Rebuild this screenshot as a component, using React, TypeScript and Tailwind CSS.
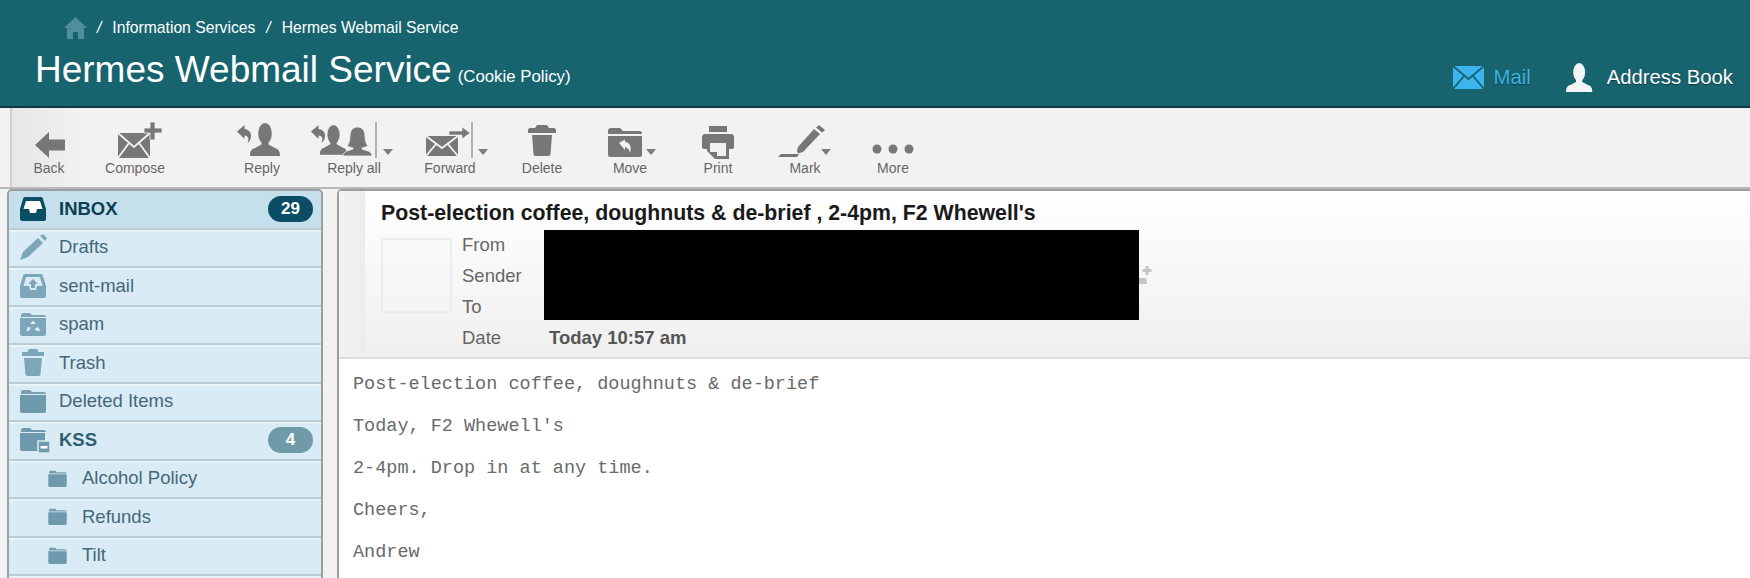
import React from "react";

const Caret = ({ className = "" }: { className?: string }) => (
  <svg width="10" height="6" viewBox="0 0 10 6" className={className}><path d="M0 0h10L5 6z" fill="#7d7d7d" /></svg>
);

const Person = ({ x = 0, y = 0, s = 1, fill = "#777" }: { x?: number; y?: number; s?: number; fill?: string }) => (
  <g transform={`translate(${x} ${y}) scale(${s})`}>
    <ellipse cx="15" cy="10.500" rx="6.800" ry="10.500" fill={fill} />
    <path d="M0 33c0-5 1.500-7 5-8l6.500-3.500V18h7v3.500L25 25c3.500 1 5 3 5 8z" fill={fill} />
  </g>
);

const ReplyArrow = ({ x, y }: { x: number; y: number }) => (
  <path transform={`translate(${x} ${y})`} d="M0 6.500L7.500 0v4c5 .5 7 4 6.500 8-.3 2.500-1.500 4.500-3.500 6 .8-2 1.200-4 .5-5.500-.6-1.300-2-2-3.500-2V14z" fill="#777" />
);

const icons: Record<string, React.ReactNode> = {
  back: (
    <svg width="30" height="26" viewBox="0 0 30 26"><path d="M14 0v7.500h16v11H14V26L0 13z" fill="#777" /></svg>
  ),
  compose: (
    <svg width="45" height="36" viewBox="0 0 45 36">
      <path d="M0 11h32v25H0z" fill="#777" />
      <path d="M0 11l16 14 16-14M0 36l11-15M32 36L21 21" fill="none" stroke="#f2f2f2" strokeWidth="1.800" />
      <path d="M28 0h5v6h7v5h-7v7h-5v-7h-6V6h6z" transform="translate(4 0)" fill="#777" stroke="#f2f2f2" strokeWidth=".8" />
    </svg>
  ),
  reply: (
    <svg width="43" height="33" viewBox="0 0 43 33">
      <ReplyArrow x={0} y={2} />
      <Person x={13} y={0} />
    </svg>
  ),
  replyall: (
    <svg width="61" height="31" viewBox="0 0 61 31">
      <ReplyArrow x={0} y={0} />
      <Person x={9} y={0} s={0.900} />
      <path d="M46.500 2c5 0 7.500 4 7.500 9 0 4 1 8 3 10-2 1-4 1.500-6 2v1l6 2c2.500 1 4 2.500 4 5H32c0-2.500 1.500-4 4-5l6-2v-1c-2-.5-4-1-6-2 2-2 3-6 3-10 0-5 2.500-9 7.500-9z" fill="#777" stroke="#f2f2f2" strokeWidth=".8" />
    </svg>
  ),
  forward: (
    <svg width="44" height="29" viewBox="0 0 44 29">
      <path d="M0 9h32v20H0z" fill="#777" />
      <path d="M0 9l16 12L32 9M0 29l11-13M32 29L21 16" fill="none" stroke="#f2f2f2" strokeWidth="1.800" />
      <path d="M23 4h13V0l8 6-8 6V8H23z" fill="#777" stroke="#f2f2f2" strokeWidth=".6" />
    </svg>
  ),
  del: (
    <svg width="28" height="31" viewBox="0 0 28 31">
      <path d="M9 0h10l2 3h5c1 0 2 1 2 2v3H0V5c0-1 1-2 2-2h5z" fill="#777" />
      <path d="M4 10h20l-1.500 19c0 1-1 2-2 2h-13c-1 0-2-1-2-2z" fill="#777" />
    </svg>
  ),
  move: (
    <svg width="34" height="29" viewBox="0 0 34 29">
      <path d="M0 3c0-2 1-3 3-3h9l3 3h17c1 0 2 1 2 2v1H0z" fill="#777" />
      <path d="M0 8h34v19c0 1-1 2-2 2H2c-1 0-2-1-2-2z" fill="#777" />
      <path d="M11 15l6-3.500V14c5 .5 7 5 5 11-.6-3-2.500-5.500-5-6v3z" fill="#f2f2f2" />
    </svg>
  ),
  print: (
    <svg width="32" height="33" viewBox="0 0 32 33">
      <path d="M7 0h18v6H7z" fill="#777" />
      <path d="M3 8h26c1.500 0 3 1 3 3v10c0 1-1 2-2 2h-3V15H5v8H2c-1 0-2-1-2-2V11c0-2 1.500-3 3-3z" fill="#777" />
      <path d="M5 15h22v18H13l-8-8z" fill="#777" />
      <path d="M8 17h16v13H15v-4H8z" fill="#f2f2f2" />
    </svg>
  ),
  mark: (
    <svg width="47" height="32" viewBox="0 0 47 32">
      <path d="M0 32l3-3h18l-2 3z" fill="#777" />
      <path d="M19 26l1-4L36 4l6 5-17 18-5 1.500z" fill="#777" />
      <path d="M38 2.500l3-2.500 6 5-3 2.500z" fill="#777" />
    </svg>
  ),
  more: (
    <svg width="42" height="10" viewBox="0 0 42 10">
      <circle cx="5" cy="5" r="4.500" fill="#777" /><circle cx="21" cy="5" r="4.500" fill="#777" /><circle cx="37" cy="5" r="4.500" fill="#777" />
    </svg>
  ),
};

const tools = [
  { k: "back", t: "Back", w: "w-[76px]", x: "pt-[24px] ml-[1px]" },
  { k: "compose", t: "Compose", w: "w-[98px]", x: "pt-[14px] ml-[11px]" },
  { k: "reply", t: "Reply", w: "w-[80px] ml-[38px]", x: "pt-[15px] mr-[7px]" },
  { k: "replyall", t: "Reply all", w: "w-[104px]", x: "pt-[17px] mr-[25px]", c: "right-[13px]", sep: "right-[29px]" },
  { k: "forward", t: "Forward", w: "w-[88px]", x: "pt-[19px] mr-[4px]", c: "right-[6px]", sep: "right-[21px]" },
  { k: "del", t: "Delete", w: "w-[96px]", x: "pt-[17px]" },
  { k: "move", t: "Move", w: "w-[80px]", x: "pt-[20px] mr-[10px]", c: "right-[14px]" },
  { k: "print", t: "Print", w: "w-[96px]", x: "pt-[18px]" },
  { k: "mark", t: "Mark", w: "w-[78px]", x: "pt-[17px] mr-[7px]", c: "right-[13px]" },
  { k: "more", t: "More", w: "w-[98px]", x: "pt-[36px]" },
];

const SideFolder = ({ size = 26, h = 24 }: { size?: number; h?: number }) => (
  <svg width={size} height={h} viewBox="0 0 26 24">
    <path d="M1 3c0-1 1-2 2-2h7l2 2h12c1 0 2 1 2 2H1z" fill="#74a0b2" />
    <path d="M0 6h26v16c0 1-1 2-2 2H2c-1 0-2-1-2-2z" fill="#6f9aad" />
  </svg>
);

const sideIcons: Record<string, React.ReactNode> = {
  inbox: (
    <svg width="26" height="24" viewBox="0 0 26 24">
      <path d="M5 0h16c1 0 2 1 2 2l3 10v10c0 1-1 2-2 2H2c-1 0-2-1-2-2V12L3 2c0-1 1-2 2-2z" fill="#0c4d66" />
      <path d="M6 4h14l2.500 8H17l-1 4h-6l-1-4H3.500z" fill="#fff" />
    </svg>
  ),
  drafts: (
    <svg width="27" height="27" viewBox="0 0 27 27" className="shrink-0">
      <path d="M0 26l3-8L18 4l5 5L8 23z" fill="#7da6b8" />
      <path d="M20 2l3-2 4 4-2 3z" fill="#7da6b8" />
    </svg>
  ),
  sent: (
    <svg width="26" height="24" viewBox="0 0 26 24">
      <path d="M5 0h16c1 0 2 1 2 2l3 10v10c0 1-1 2-2 2H2c-1 0-2-1-2-2V12L3 2c0-1 1-2 2-2z" fill="#7da6b8" />
      <path d="M6 3h14l2.500 9H17l-1 4h-6l-1-4H3.500z" fill="#d9ebf4" />
      <path d="M13 5l5 5h-3v4h-4v-4H8z" fill="#7da6b8" />
    </svg>
  ),
  spam: (
    <svg width="26" height="24" viewBox="0 0 26 24">
      <path d="M1 3c0-1 1-2 2-2h7l2 2h12c1 0 2 1 2 2H1z" fill="#7da6b8" />
      <path d="M0 6h26v16c0 1-1 2-2 2H2c-1 0-2-1-2-2z" fill="#7da6b8" />
      <path d="M13 8.500l3 3.500h-6zM7.500 15l3.500.5-2 3.500H6.500zM18.500 15l1.500 4h-3.500l-2-2.500z" fill="#d9ebf4" />
    </svg>
  ),
  trash: (
    <svg width="22" height="27" viewBox="0 0 22 27">
      <path d="M7 0h8l1.500 3H22v4H0V3h5.500z" fill="#7da6b8" />
      <path d="M2 9h18l-1.500 16c0 1-1 2-2 2h-11c-1 0-2-1-2-2z" fill="#7da6b8" />
    </svg>
  ),
  folder: <SideFolder />,
  kss: (
    <svg width="30" height="26" viewBox="0 0 30 26" className="shrink-0">
      <path d="M1 3c0-1 1-2 2-2h7l2 2h12c1 0 2 1 2 2H1z" fill="#6f9aad" />
      <path d="M0 6h25v16c0 1-1 2-2 2H2c-1 0-2-1-2-2z" fill="#6f9aad" />
      <path d="M18 14h12v12H18z" fill="#6f9aad" stroke="#d9ebf4" strokeWidth="1.500" />
      <path d="M20.500 19h7v2.500h-7z" fill="#fff" />
    </svg>
  ),
  sub: <SideFolder size={19} h={17} />,
};

const rows = [
  { k: "inbox", t: "INBOX", n: "29", active: true },
  { k: "drafts", t: "Drafts" },
  { k: "sent", t: "sent-mail" },
  { k: "spam", t: "spam" },
  { k: "trash", t: "Trash" },
  { k: "folder", t: "Deleted Items" },
  { k: "kss", t: "KSS", n: "4", bold: true },
  { k: "sub", t: "Alcohol Policy", sub: true },
  { k: "sub", t: "Refunds", sub: true },
  { k: "sub", t: "Tilt", sub: true },
  { k: "", t: "" },
];

const metaRows = ["From", "Sender", "To"];
const body = ["Post-election coffee, doughnuts & de-brief", "Today, F2 Whewell's", "2-4pm. Drop in at any time.", "Cheers,", "Andrew"];

export default function App() {
  return (
    <div className="h-[578px] w-[1750px] overflow-hidden bg-[#f2f2f2] font-['Liberation_Sans',Arial,sans-serif]">
      <header className="flex h-[108px] items-start justify-between border-b-2 border-[#0b3b44] bg-[#17646f] text-white">
        <div className="pl-[35px]">
          <div className="flex h-[54px] items-center pl-[29px] pt-[1px] text-[15.700px]">
            <svg width="23" height="22" viewBox="0 0 23 22"><path d="M11.500 0L23 11h-3v11h-6v-7H9v7H3V11H0z" fill="#4f8f9a" /></svg>
            <span className="ml-[10px] italic">/</span>
            <span className="ml-[11px]">Information Services</span>
            <span className="ml-[11px] italic">/</span>
            <span className="ml-[11px]">Hermes Webmail Service</span>
          </div>
          <div className="flex items-baseline">
            <h1 className="text-[37px] font-normal leading-[32px]">Hermes Webmail Service</h1>
            <span className="ml-[6px] text-[16.800px]">(Cookie Policy)</span>
          </div>
        </div>
        <nav className="flex items-center pr-[17px] pt-[62px] text-[20.300px] [text-shadow:0_1px_1px_#0b3b44]">
          <svg width="31" height="23" viewBox="0 0 31 23">
            <path d="M0 0h31v23H0z" fill="#3db4ee" />
            <path d="M0 0l15.500 13L31 0M0 23l11-13M31 23L20 10" fill="none" stroke="#17646f" strokeWidth="1.800" />
          </svg>
          <span className="ml-[10px] text-[#3fb0e0]">Mail</span>
          <svg width="28" height="29" viewBox="0 0 30 31" className="ml-[35px]"><Person s={0.940} fill="#f4f4f4" /></svg>
          <span className="ml-[13px]">Address Book</span>
        </nav>
      </header>

      <div className="flex h-[81px] border-b-2 border-[#b8b8b8] bg-[#f2f2f2] pl-[10px]">
        {tools.map((t, i) => (
          <div
            key={t.t}
            className={`relative flex h-[79px] flex-col items-center ${t.w} ${i === 0 ? "border-l-2 border-[#cfcfcf] bg-gradient-to-r from-[#e6e6e6] to-[#f2f2f2]" : ""}`}
          >
            <div className={`flex h-[52px] items-start justify-center ${t.x}`}>{icons[t.k]}</div>
            <span className="text-[14px] leading-[16px] text-[#666]">{t.t}</span>
            {t.sep && <span className={`absolute top-[14px] h-[36px] w-[2px] bg-[#b0b0b0] ${t.sep}`} />}
            {t.c && <Caret className={`absolute top-[41px] ${t.c}`} />}
          </div>
        ))}
      </div>

      <div className="flex">
        <aside className="ml-[7px] h-[400px] w-[316px] shrink-0 overflow-hidden rounded-t-[5px] border-2 border-[#9a9ea0] bg-[#d9ebf4]">
          {rows.map((r, i) => (
            <div
              key={i}
              className={`flex h-[38.500px] items-center border-b-2 border-[#b9cdd6] pb-[1px] text-[18.500px] shadow-[inset_0_2px_0_#e9f4f9] ${r.active ? "bg-[#c5e0ec] font-bold text-[#0c3f55] shadow-none" : r.n ? "font-bold text-[#2f5f72]" : "text-[#44687a]"} ${r.sub ? "pl-[39px]" : "pl-[11px]"}`}
            >
              <span className={`flex shrink-0 items-center ${r.k === "kss" ? "justify-start" : "justify-center"} ${r.sub ? "w-[19px]" : "w-[26px]"}`}>{r.k && sideIcons[r.k]}</span>
              <span className={r.sub ? "ml-[15px]" : "ml-[13px]"}>{r.t}</span>
              {r.n && (
                <span className={`ml-auto mr-[8px] flex h-[26px] w-[45px] items-center justify-center rounded-full text-[17px] font-bold text-white ${r.active ? "bg-[#0c4d66]" : "bg-[#6f9aa8]"}`}>
                  {r.n}
                </span>
              )}
            </div>
          ))}
        </aside>

        <main className="ml-[14px] flex-1 rounded-tl-[5px] border-l-2 border-t-2 border-[#9a9ea0] bg-white">
          <section className="flex h-[168px] border-b-2 border-[#dedede] bg-gradient-to-b from-white to-[#efefef]">
            <div className="w-[26px] bg-gradient-to-r from-[#f3f3f3] to-[#ececec]" />
            <div className="relative flex-1 pl-[16px]">
              <h2 className="pt-[10px] text-[21.300px] font-bold leading-[24px] text-[#1a1a1a]">
                Post-election coffee, doughnuts &amp; de-brief , 2-4pm, F2 Whewell's
              </h2>
              <div className="flex pt-[13px]">
                <div className="mr-[10px] h-[75px] w-[71px] rounded-[4px] border-2 border-[#ececec]" />
                <div className="-mt-[9px] text-[18.500px] leading-[31px] text-[#666]">
                  {metaRows.map((m) => <div key={m}>{m}</div>)}
                  <div className="flex">
                    <span className="w-[87px]">Date</span>
                    <span className="font-bold text-[#555]">Today 10:57 am</span>
                  </div>
                </div>
              </div>
              <svg width="14" height="20" viewBox="0 0 14 20" className="absolute left-[774px] top-[73px]">
                <path d="M0 14h7l1 6H0zM6.500 2h3v3h3v3h-3v3h-3V8h-3V5h3z" fill="#c4c4c4" />
              </svg>
              <div className="absolute left-[179px] top-[39px] h-[90px] w-[595px] bg-black" />
            </div>
          </section>
          <article className="pl-[14px] pt-[5px] font-['Liberation_Mono',monospace] text-[18.500px] leading-[42px] text-[#6a6a6a]">
            {body.map((b) => <p key={b}>{b}</p>)}
          </article>
        </main>
      </div>
    </div>
  );
}
